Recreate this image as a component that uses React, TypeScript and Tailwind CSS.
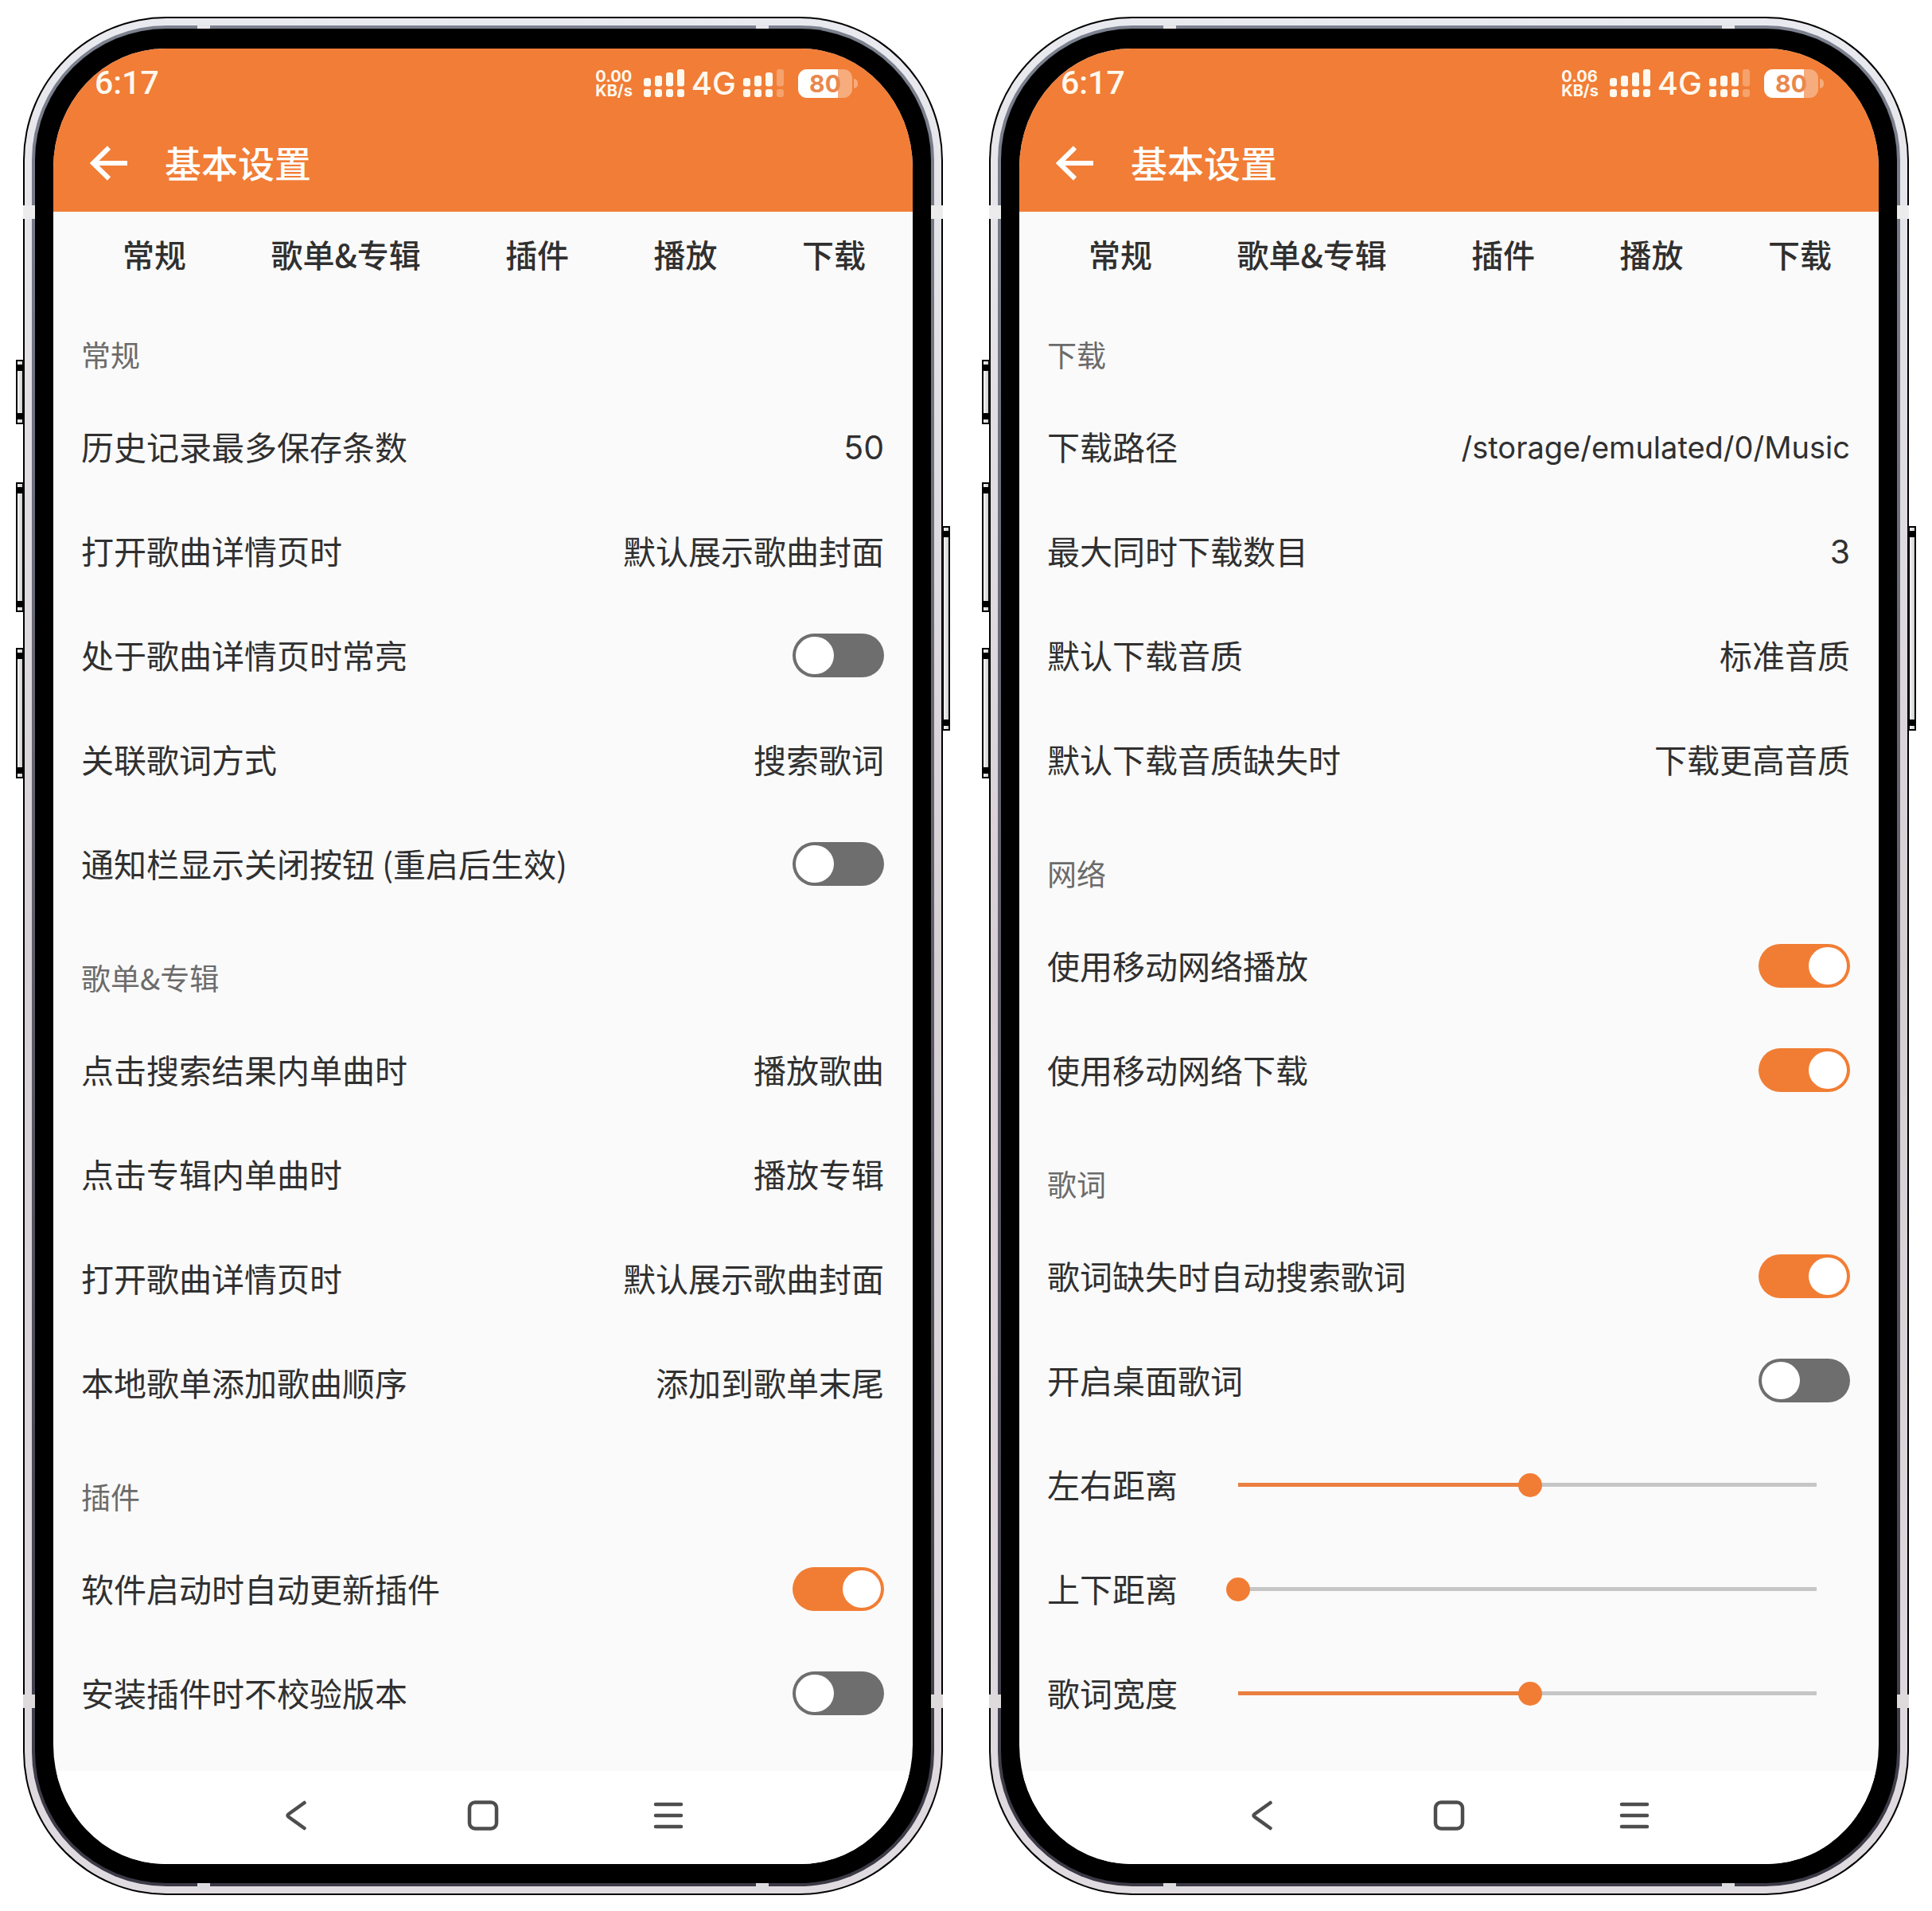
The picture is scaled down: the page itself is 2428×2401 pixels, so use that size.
import { useId, useState } from "react";

type Item =
  | { kind: "value"; label: string; value: string }
  | { kind: "path"; label: string; value: string }
  | { kind: "number"; label: string; value: number }
  | { kind: "switch"; label: string; on: boolean }
  | { kind: "slider"; label: string; value: number };

interface Section {
  title: string;
  items: Item[];
}

const TABS = ["常规", "歌单&专辑", "插件", "播放", "下载"];

const LEFT: Section[] = [
  {
    title: "常规",
    items: [
      { kind: "number", label: "历史记录最多保存条数", value: 50 },
      { kind: "value", label: "打开歌曲详情页时", value: "默认展示歌曲封面" },
      { kind: "switch", label: "处于歌曲详情页时常亮", on: false },
      { kind: "value", label: "关联歌词方式", value: "搜索歌词" },
      { kind: "switch", label: "通知栏显示关闭按钮 (重启后生效)", on: false },
    ],
  },
  {
    title: "歌单&专辑",
    items: [
      { kind: "value", label: "点击搜索结果内单曲时", value: "播放歌曲" },
      { kind: "value", label: "点击专辑内单曲时", value: "播放专辑" },
      { kind: "value", label: "打开歌曲详情页时", value: "默认展示歌曲封面" },
      { kind: "value", label: "本地歌单添加歌曲顺序", value: "添加到歌单末尾" },
    ],
  },
  {
    title: "插件",
    items: [
      { kind: "switch", label: "软件启动时自动更新插件", on: true },
      { kind: "switch", label: "安装插件时不校验版本", on: false },
    ],
  },
];

const RIGHT: Section[] = [
  {
    title: "下载",
    items: [
      { kind: "path", label: "下载路径", value: "/storage/emulated/0/Music" },
      { kind: "number", label: "最大同时下载数目", value: 3 },
      { kind: "value", label: "默认下载音质", value: "标准音质" },
      { kind: "value", label: "默认下载音质缺失时", value: "下载更高音质" },
    ],
  },
  {
    title: "网络",
    items: [
      { kind: "switch", label: "使用移动网络播放", on: true },
      { kind: "switch", label: "使用移动网络下载", on: true },
    ],
  },
  {
    title: "歌词",
    items: [
      { kind: "switch", label: "歌词缺失时自动搜索歌词", on: true },
      { kind: "switch", label: "开启桌面歌词", on: false },
      { kind: "slider", label: "左右距离", value: 50.5 },
      { kind: "slider", label: "上下距离", value: 0 },
      { kind: "slider", label: "歌词宽度", value: 50.5 },
    ],
  },
];

function Signal({ level }: { level: number }) {
  const tops = [11, 8, 4, 0];
  return (
    <svg width="51" height="35" viewBox="0 0 51 35" fill="#fff8ee" aria-hidden="true">
      {tops.map((top, i) => (
        <g key={i} opacity={i < level ? 1 : 0.3}>
          <rect x={i * 14} y={top} width="9" height={21.5 - top} rx="3" />
          <rect x={i * 14} y="25" width="9" height="10" rx="3" />
        </g>
      ))}
    </svg>
  );
}

function Battery() {
  return (
    <div className="flex items-center gap-[2px]">
      <div className="flex h-9 w-[68px] items-center justify-center rounded-[11px] bg-linear-to-r from-white from-[74%] to-[#f6ac7c] to-[74%]">
        <span className="font-['Inter',sans-serif] text-[30px] leading-9 font-bold text-[#e9874d]">80</span>
      </div>
      <div className="h-3 w-[5px] rounded-r-full bg-[#f6ac7c]" />
    </div>
  );
}

function StatusBar({ speed }: { speed: string }) {
  return (
    <div className="flex h-[83px] items-center justify-between pt-1 pr-[69px] pl-[52px] text-[#fff8ee]">
      <span className="font-['Roboto',sans-serif] text-[41px] leading-none font-medium">6:17</span>
      <div className="flex items-center font-['Inter',sans-serif]">
        <div className="text-[20px] leading-[18px] font-bold">
          <div>{speed}</div>
          <div>KB/s</div>
        </div>
        <div className="ml-[14px] flex items-center gap-[9px]">
          <Signal level={4} />
          <span className="text-[40px] leading-none font-medium">4G</span>
          <Signal level={3} />
        </div>
        <div className="ml-[18px]">
          <Battery />
        </div>
      </div>
    </div>
  );
}

function Switch({ id, initial }: { id: string; initial: boolean }) {
  const [on, setOn] = useState(initial);
  return (
    <span className="relative flex h-[55px] w-[115px] shrink-0">
      <input
        id={id}
        type="checkbox"
        role="switch"
        checked={on}
        onChange={(e) => setOn(e.target.checked)}
        className="peer h-full w-full cursor-pointer appearance-none rounded-full bg-[#6e6e6e] checked:bg-[#f17d34]"
      />
      <span className="pointer-events-none absolute top-1 left-1 h-[47px] w-12 rounded-full bg-white peer-checked:right-1 peer-checked:left-auto" />
    </span>
  );
}

function Slider({ id, initial }: { id: string; initial: number }) {
  const [value, setValue] = useState(initial);
  return (
    <input
      id={id}
      type="range"
      min={0}
      max={100}
      step={0.5}
      value={value}
      onChange={(e) => setValue(Number(e.target.value))}
      style={{ backgroundImage: `linear-gradient(to right, #ea7f40 ${value}%, #c6c6c6 ${value}%)` }}
      className="mr-[27px] ml-[61px] h-8 min-w-0 flex-1 cursor-pointer appearance-none bg-[length:calc(100%_-_30px)_5px] bg-center bg-no-repeat [&::-webkit-slider-thumb]:size-[30px] [&::-webkit-slider-thumb]:appearance-none [&::-webkit-slider-thumb]:rounded-full [&::-webkit-slider-thumb]:bg-[#f17d34]"
    />
  );
}

function Row({ item }: { item: Item }) {
  const id = useId();
  const isControl = item.kind === "switch" || item.kind === "slider";
  return (
    <li className="flex h-[131px] items-center justify-between text-[41px] text-[#303030]">
      {isControl ? (
        <label htmlFor={id} className="pb-[2px]">
          {item.label}
        </label>
      ) : (
        <span className="pb-[2px]">{item.label}</span>
      )}
      {item.kind === "value" && <span className="pb-[2px]">{item.value}</span>}
      {item.kind === "number" && <span className="pt-[2px] font-['Inter',sans-serif]">{item.value}</span>}
      {item.kind === "path" && <span className="pt-[2px] font-['Inter',sans-serif] text-[38px]">{item.value}</span>}
      {item.kind === "switch" && <Switch id={id} initial={item.on} />}
      {item.kind === "slider" && <Slider id={id} initial={item.value} />}
    </li>
  );
}

// hardware key on the edge of the case
function SideKey({ className }: { className: string }) {
  return (
    <div className={`absolute flex w-[10px] flex-col justify-between border-2 border-black bg-linear-to-r from-[#f5f5f5] to-[#cfcfcf] py-1 ${className}`}>
      <div className="h-2 bg-black" />
      <div className="h-2 bg-black" />
    </div>
  );
}

function Phone({ speed, sections }: { speed: string; sections: Section[] }) {
  return (
    <div className="relative">
      <SideKey className="top-[431px] -left-[9px] h-[81px]" />
      <SideKey className="top-[585px] -left-[9px] h-[163px]" />
      <SideKey className="top-[793px] -left-[9px] h-[164px]" />
      <SideKey className="top-[640px] -right-[9px] h-[257px]" />

      <div className="relative rounded-[180px] bg-black p-[2px]">
        <div className="rounded-[178px] bg-linear-to-b from-[#e9eaef] via-[#d6cfd4] to-[#e0dbe0] p-[9px]">
          <div className="rounded-[169px] bg-linear-to-b from-[#7d8290] via-[#5f5d69] to-[#3b3945] p-1">
            <div className="rounded-[165px] bg-black px-[23px] pt-[25px] pb-6">
              <Screen speed={speed} sections={sections} />
            </div>
          </div>
        </div>

        {/* antenna bands */}
        <div className="absolute top-[10px] left-[219px] h-[5px] w-4 bg-[#e6e6ea]" />
        <div className="absolute top-[10px] right-[219px] h-[5px] w-4 bg-[#e6e6ea]" />
        <div className="absolute bottom-[5px] left-[219px] h-[10px] w-4 bg-[#dcdce0]" />
        <div className="absolute right-[219px] bottom-[5px] h-[10px] w-4 bg-[#dcdce0]" />
        <div className="absolute top-[237px] left-0 h-[17px] w-[15px] bg-[#ececec]" />
        <div className="absolute top-[237px] right-0 h-[17px] w-[15px] bg-[#ececec]" />
        <div className="absolute bottom-[235px] left-0 h-[17px] w-[15px] bg-[#dedadb]" />
        <div className="absolute right-0 bottom-[235px] h-[17px] w-[15px] bg-[#dedadb]" />
      </div>
    </div>
  );
}

function Screen({ speed, sections }: { speed: string; sections: Section[] }) {
  return (
    <div className="overflow-hidden rounded-[140px/150px] bg-[#fafafa]">
      <header className="bg-[#f17d36]">
        <StatusBar speed={speed} />
        <div className="flex h-[122px] items-center gap-[47px] pl-[45px] text-white">
          <button type="button" aria-label="返回">
            <svg width="48" height="44" viewBox="0 0 48 44" fill="none" stroke="currentColor" strokeWidth="6">
              <path d="M25 2.500L5 22l20 19.500M5 22h43" />
            </svg>
          </button>
          <h1 className="pb-1 text-[46px] leading-none font-medium">基本设置</h1>
        </div>
      </header>

      <nav className="flex h-[102px] items-center justify-between pt-1 pr-[59px] pl-[87px]">
        {TABS.map((tab) => (
          <button key={tab} type="button" className="text-[40px] font-medium text-[#303030]">
            {tab}
          </button>
        ))}
      </nav>

      <main className="pr-9 pb-8 pl-[35px]">
        {sections.map((section) => (
          <section key={section.title}>
            <h2 className="flex h-32 items-center pt-7 text-[37px] text-[#6b6b6b]">{section.title}</h2>
            <ul>
              {section.items.map((item) => (
                <Row key={item.label} item={item} />
              ))}
            </ul>
          </section>
        ))}
      </main>

      <div className="flex h-[117px] items-center justify-center bg-white pb-[6px] text-[#4d4d4d]">
        <button type="button" aria-label="后退" className="flex w-[233px] justify-center">
          <svg width="40" height="40" viewBox="0 0 40 40" fill="none" stroke="currentColor" strokeWidth="4.500" strokeLinecap="round" strokeLinejoin="round">
            <path d="M28.500 4L9 18q-3 2 0 4L28.500 36" />
          </svg>
        </button>
        <button type="button" aria-label="主页" className="flex w-[233px] justify-center">
          <svg width="40" height="40" viewBox="0 0 40 40" fill="none" stroke="currentColor" strokeWidth="4.500">
            <rect x="3" y="3.500" width="34" height="33" rx="7" />
          </svg>
        </button>
        <button type="button" aria-label="最近任务" className="flex w-[233px] justify-center">
          <svg width="40" height="40" viewBox="0 0 40 40" fill="none" stroke="currentColor" strokeWidth="4.500" strokeLinecap="round">
            <path d="M4 6h32M4 20h32M4 34h32" />
          </svg>
        </button>
      </div>
    </div>
  );
}

export default function App() {
  return (
    <div className="grid grid-cols-2 bg-white font-['Noto_Sans_CJK_SC',sans-serif]">
      <div className="px-[29px] py-[21px]">
        <Phone speed="0.00" sections={LEFT} />
      </div>
      <div className="px-[29px] py-[21px]">
        <Phone speed="0.06" sections={RIGHT} />
      </div>
    </div>
  );
}
